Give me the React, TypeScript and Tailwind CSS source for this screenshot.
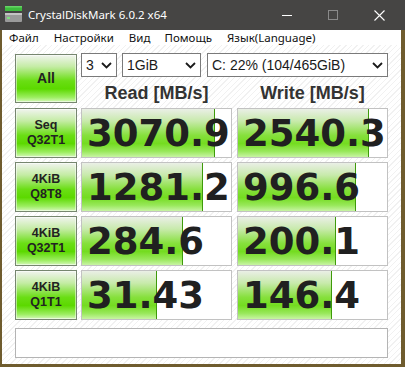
import React from 'react';

type Row = { l1: string; l2: string; read: string; readPct: number; write: string; writePct: number };

const rows: Row[] = [
  { l1: 'Seq', l2: 'Q32T1', read: '3070.9', readPct: 89, write: '2540.3', writePct: 88 },
  { l1: '4KiB', l2: 'Q8T8', read: '1281.2', readPct: 81, write: '996.6', writePct: 79 },
  { l1: '4KiB', l2: 'Q32T1', read: '284.6', readPct: 68, write: '200.1', writePct: 66 },
  { l1: '4KiB', l2: 'Q1T1', read: '31.43', readPct: 50, write: '146.4', writePct: 63 },
];

const Chevron = () => (
  <svg width="11" height="7" viewBox="0 0 11 7" className="shrink-0">
    <path d="M1 1 L5.5 5.5 L10 1" fill="none" stroke="#1a1a1a" strokeWidth="1.8" />
  </svg>
);

const FakeSelect = ({ text, width }: { text: string; width: string }) => (
  <div className={`${width} h-[24px] bg-white border border-[#7a7a7a] flex items-center justify-between pl-[4px] pr-[4px] text-[14px] text-[#1a1a1a] font-['Liberation_Sans',Arial,sans-serif]`}>
    <span className="leading-none">{text}</span>
    <Chevron />
  </div>
);

const GreenButton = ({ children, className = '' }: { children: React.ReactNode; className?: string }) => (
  <div
    className={`w-[62px] border border-[#76866f] shadow-[inset_0_0_0_1px_rgba(255,255,255,0.5)] bg-[linear-gradient(to_bottom,#f1f4ef_0%,#c4ecA4_25%,#6ade14_55%,#5cd900_72%,#9cee60_90%,#d6f8bc_100%)] flex flex-col items-center justify-center font-bold text-[#222] font-['Liberation_Sans',Arial,sans-serif] ${className}`}
  >
    {children}
  </div>
);

const Meter = ({ value, pct }: { value: string; pct: number }) => (
  <div className="relative w-[151px] h-full bg-white border border-[#c2c2c2] overflow-hidden">
    <div
      className="absolute left-0 top-0 bottom-0 border-r border-[#3e9a0a] bg-[linear-gradient(to_bottom,#eaefe6_0%,#c8eaac_25%,#86e03c_55%,#74dc20_72%,#98e85a_88%,#c8f4a4_100%)]"
      style={{ width: `${pct}%` }}
    />
    <div className="relative h-full flex items-center pl-[5px] font-['DejaVu_Sans',Verdana,sans-serif] font-bold text-[37px] leading-none text-[#202020] tracking-[0px] whitespace-nowrap">
      {value}
    </div>
  </div>
);

const AppIcon = () => (
  <svg width="17" height="17" viewBox="0 0 17 17">
    <rect x="0" y="0" width="17" height="5" fill="#3dbb3d" />
    <rect x="0" y="0" width="17" height="1.5" fill="#66d466" />
    <rect x="0" y="7" width="17" height="9" rx="1" fill="#9a9a9a" />
    <rect x="0" y="7" width="17" height="2" fill="#c4c4c4" />
    <rect x="2" y="11" width="3" height="2" fill="#7ee07e" />
  </svg>
);

export default function App() {
  return (
    <div className="w-[405px] h-[367px] bg-[#6f5c2e] flex flex-col overflow-hidden font-['Noto_Sans','Liberation_Sans',sans-serif]">
      {/* title bar */}
      <div className="h-[30px] bg-[#464544] flex items-center shrink-0">
        <div className="ml-[5px] mr-[6px] mt-[-1px]">
          <AppIcon />
        </div>
        <span className="text-white text-[11.5px] leading-none">CrystalDiskMark 6.0.2 x64</span>
        <div className="ml-auto flex items-center h-full">
          <div className="w-[46px] h-full flex items-center justify-center">
            <div className="w-[10px] h-[1px] bg-white" />
          </div>
          <div className="w-[46px] h-full flex items-center justify-center">
            <div className="w-[10px] h-[10px] border border-[#8a8a8a]" />
          </div>
          <div className="w-[46px] h-full flex items-center justify-center mr-[3px]">
            <svg width="11" height="11" viewBox="0 0 11 11">
              <path d="M0.5 0.5 L10.5 10.5 M10.5 0.5 L0.5 10.5" stroke="#fff" strokeWidth="1.1" />
            </svg>
          </div>
        </div>
      </div>

      <div className="flex-1 flex flex-col ml-[2px] mr-[4px] mb-[3px]">
        {/* menu */}
        <div className="h-[15px] bg-white flex items-center text-[11.5px] text-[#111] leading-none shrink-0">
          <span className="ml-[7px]">Файл</span>
          <span className="ml-[15px]">Настройки</span>
          <span className="ml-[15px]">Вид</span>
          <span className="ml-[14px]">Помощь</span>
          <span className="ml-[15px]">Язык(Language)</span>
        </div>

        {/* body */}
        <div className="flex-1 pl-[13px] pt-[8px] bg-[repeating-linear-gradient(135deg,#ffffff_0px,#ffffff_3px,#f1f1f1_3px,#f1f1f1_4px)]">
          <div className="flex h-[55px]">
            <GreenButton className="h-[49px] mt-[1px] text-[14px]">All</GreenButton>
            <div className="ml-[4px] flex flex-col">
              <div className="flex">
                <FakeSelect text="3" width="w-[36px]" />
                <div className="ml-[5px]"><FakeSelect text="1GiB" width="w-[79px]" /></div>
                <div className="ml-[6px]"><FakeSelect text="C: 22% (104/465GiB)" width="w-[181px]" /></div>
              </div>
              <div className="flex flex-1 items-center font-['Liberation_Sans',Arial,sans-serif] font-bold text-[18px] text-[#333] leading-none">
                <div className="w-[151px] text-center">Read [MB/s]</div>
                <div className="w-[151px] ml-[5px] text-center">Write [MB/s]</div>
              </div>
            </div>
          </div>

          <div className="flex flex-col gap-[4px]">
            {rows.map((r, i) => (
              <div key={i} className="flex h-[50px]">
                <GreenButton className="h-full text-[12.5px] leading-[15px]">
                  <span>{r.l1}</span>
                  <span>{r.l2}</span>
                </GreenButton>
                <div className="ml-[4px] h-full">
                  <Meter value={r.read} pct={r.readPct} />
                </div>
                <div className="ml-[5px] h-full">
                  <Meter value={r.write} pct={r.writePct} />
                </div>
              </div>
            ))}
          </div>

          <div className="mt-[8px] w-[373px] h-[30px] bg-white border border-[#b4b4b4]" />
        </div>
      </div>
    </div>
  );
}
